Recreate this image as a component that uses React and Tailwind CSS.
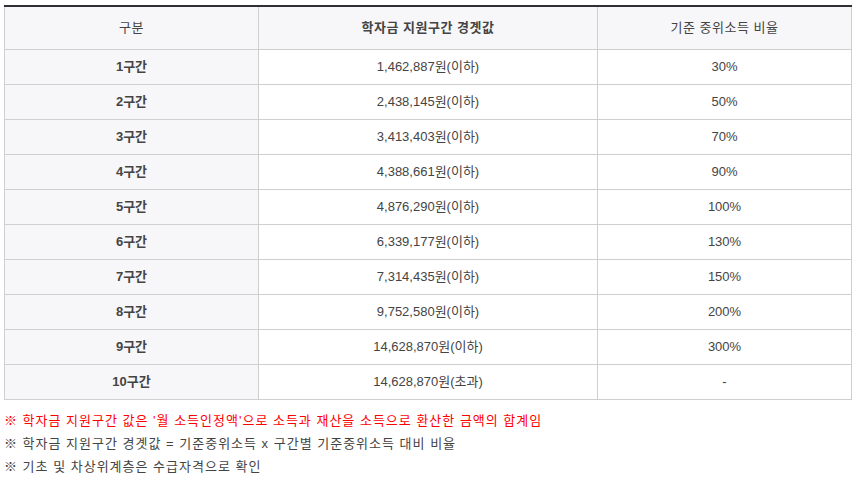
const rows = [
  ["1구간", "1,462,887원(이하)", "30%"],
  ["2구간", "2,438,145원(이하)", "50%"],
  ["3구간", "3,413,403원(이하)", "70%"],
  ["4구간", "4,388,661원(이하)", "90%"],
  ["5구간", "4,876,290원(이하)", "100%"],
  ["6구간", "6,339,177원(이하)", "130%"],
  ["7구간", "7,314,435원(이하)", "150%"],
  ["8구간", "9,752,580원(이하)", "200%"],
  ["9구간", "14,628,870원(이하)", "300%"],
  ["10구간", "14,628,870원(초과)", "-"],
]

export default function App() {
  return (
    <div className="w-[857px] h-[489px] bg-white pl-[4px] pt-[5px] text-[13px] text-[#444] font-['Liberation_Sans','Noto_Sans_CJK_KR',sans-serif]">
      <table className="w-[847px] border-collapse table-fixed border-t-2 border-t-[#2f3036]">
        <colgroup>
          <col className="w-[254px]" />
          <col className="w-[339px]" />
          <col className="w-[254px]" />
        </colgroup>
        <thead>
          <tr className="h-[43px] bg-[#f7f7f9] tracking-[0.5px]">
            <th className="border border-[#cfcfcf] border-t-0 font-normal text-[#444]">구분</th>
            <th className="border border-[#cfcfcf] border-t-0 font-bold text-[#444]">학자금 지원구간 경곗값</th>
            <th className="border border-[#cfcfcf] border-t-0 font-normal text-[#444]">기준 중위소득 비율</th>
          </tr>
        </thead>
        <tbody>
          {rows.map(([a, b, c]) => (
            <tr key={a} className="h-[35px]">
              <td className="border border-[#cfcfcf] bg-[#f7f7f9] text-center font-bold text-[#444]">{a}</td>
              <td className="border border-[#cfcfcf] text-center">{b}</td>
              <td className="border border-[#cfcfcf] text-center">{c}</td>
            </tr>
          ))}
        </tbody>
      </table>
      <div className="mt-[9px] flex flex-col leading-[23px] tracking-[1px]">
        <p className="text-[#ff0000]">※ 학자금 지원구간 값은 '월 소득인정액'으로 소득과 재산을 소득으로 환산한 금액의 합계임</p>
        <p>※ 학자금 지원구간 경곗값 = 기준중위소득 x 구간별 기준중위소득 대비 비율</p>
        <p>※ 기초 및 차상위계층은 수급자격으로 확인</p>
      </div>
    </div>
  )
}
